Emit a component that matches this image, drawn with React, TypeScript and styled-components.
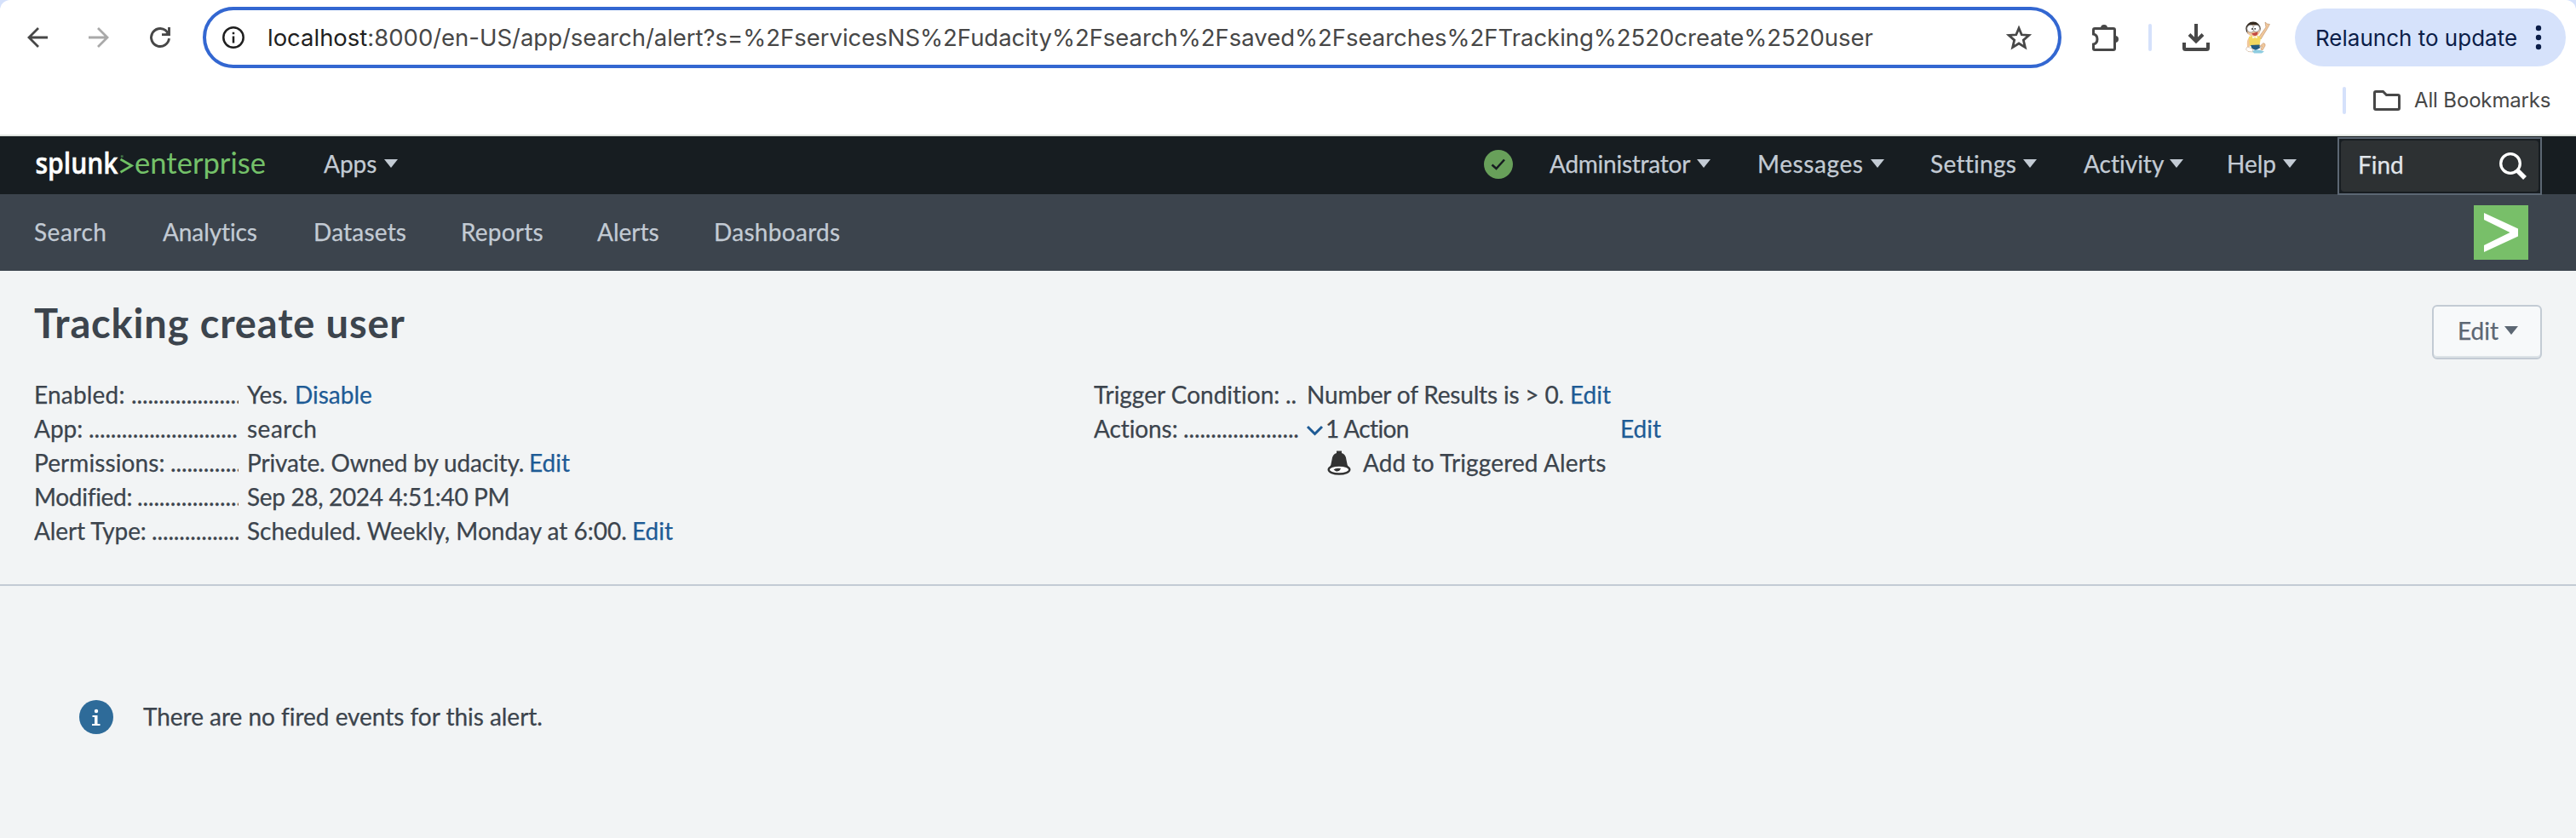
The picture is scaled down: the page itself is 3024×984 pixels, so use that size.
import React from 'react';
import styled, { createGlobalStyle } from 'styled-components';

const GlobalStyle = createGlobalStyle`
  * { box-sizing: border-box; }
  body { margin: 0; background: #f2f4f5; }
  a { color: inherit; text-decoration: none; }
`;

const Page = styled.div`
  width: 3024px;
  height: 984px;
  overflow: hidden;
  background: #f2f4f5;
  color: #3c444d;
  font-family: Lato, 'Open Sans', sans-serif;
  font-size: 28px;
  font-variant-ligatures: none;
  -webkit-text-stroke: 0.25px currentColor;
  white-space: nowrap;
`;

/* Browser chrome */
const ChromeBack = styled.div`
  background: #d5e1fb;
`;
const Chrome = styled.header`
  height: 160px;
  background: #fff;
  border-bottom: 2px solid #dfe3df;
  border-radius: 12px 12px 0 0;
  font-family: Inter, Roboto, sans-serif;
  color: #474747;
  -webkit-text-stroke: 0;
`;
const Toolbar = styled.div`
  height: 88px;
  display: flex;
  align-items: center;
  padding-left: 32px;
`;
const Glyph = styled.svg<{ $ml?: number }>`
  display: block;
  flex: none;
  overflow: visible;
  margin-left: ${(p) => p.$ml ?? 0}px;
`;
const AddressBar = styled.div`
  width: 2182px;
  height: 72px;
  margin-left: 38px;
  padding-left: 19px;
  border: 4px solid #3367d1;
  border-radius: 36px;
  display: flex;
  align-items: center;
`;
const Url = styled.span`
  width: 2041px;
  margin-left: 27px;
  font-size: 27.5px;
  letter-spacing: -0.02px;
  b { font-weight: 400; color: #1f1f1f; }
`;
const Separator = styled.i<{ $ml: number }>`
  width: 4px;
  height: 32px;
  margin-left: ${(p) => p.$ml}px;
  border-radius: 2px;
  background: #d5e1fb;
`;
const Relaunch = styled.button`
  width: 318px;
  height: 68px;
  margin-left: 29px;
  padding: 0 28px 0 24px;
  border: 0;
  border-radius: 34px;
  background: #d6e2fb;
  color: #0b1d48;
  font: 26px Inter, Roboto, sans-serif;
  display: flex;
  align-items: center;
  justify-content: space-between;
`;
const BookmarksBar = styled.div`
  height: 60px;
  display: flex;
  align-items: center;
  padding-left: 2750px;
  font-size: 24px;
  letter-spacing: -0.15px;
  span { margin: -1px 0 0 16px; }
`;

/* Application bars */
const AppBar = styled.nav`
  height: 68px;
  background: #171d21;
  color: #c3cbd4;
  display: flex;
  align-items: flex-start;
  padding-left: 40px;
`;
const Menu = styled.a<{ $w: number; $track?: number }>`
  width: ${(p) => p.$w}px;
  line-height: 64px;
  letter-spacing: ${(p) => p.$track ?? 0}px;
  display: flex;
  align-items: center;
`;
const Caret = styled.i<{ $ml?: number }>`
  flex: none;
  margin-left: ${(p) => p.$ml ?? 10}px;
  border: 8px solid transparent;
  border-top: 10px solid currentColor;
  border-bottom: 0;
`;
const Health = styled.div`
  width: 34px;
  height: 34px;
  margin: 16px 43px 0 1275px;
  border-radius: 50%;
  background: #68a05a;
  display: flex;
  align-items: center;
  justify-content: center;
`;
const FindBox = styled.div`
  width: 240px;
  height: 68px;
  margin-top: 1px;
  padding: 2px;
  border: 2px solid #5c6773;
  background: #171d21;
`;
const FindField = styled.div`
  height: 60px;
  padding: 0 14px 0 20px;
  border-radius: 4px;
  background: #2d3133;
  color: #e1e6eb;
  display: flex;
  align-items: center;
  justify-content: space-between;
  span { margin-top: -4px; }
`;
const NavBar = styled.nav`
  height: 90px;
  background: #3c444d;
  color: #c3cbd4;
  display: flex;
  align-items: center;
  padding: 0 56px 0 40px;
`;
const NavLink = styled.a<{ $w: number; $track?: number }>`
  width: ${(p) => p.$w}px;
  margin-top: -3px;
  letter-spacing: ${(p) => p.$track ?? 0}px;
`;
const AppBadge = styled.svg`
  display: block;
  margin-left: auto;
  background: #78bf69;
`;

/* Alert details */
const Details = styled.section`
  height: 370px;
  padding: 40px 40px 0;
  border-bottom: 2px solid #c3cbd4;
`;
const Heading = styled.div`
  height: 85px;
  display: flex;
  justify-content: space-between;
  align-items: flex-start;
`;
const Title = styled.h1`
  margin: -8px 0 0;
  font-size: 47px;
  line-height: 58px;
  font-weight: 700;
  letter-spacing: 0.85px;
  -webkit-text-stroke: 0;
`;
const EditButton = styled.button`
  width: 129px;
  height: 64px;
  padding: 0 0 5px 28px;
  border: 2px solid #c3cbd4;
  border-radius: 6px;
  box-shadow: inset 0 -2px 0 #dde3e7;
  background: #f7f9fa;
  color: #5c6773;
  font: 28px Lato, sans-serif;
  display: flex;
  align-items: center;
`;
const Columns = styled.div`
  display: grid;
  grid-template-columns: 1244px 1fr;
`;
const Entry = styled.div`
  height: 40px;
  line-height: 40px;
  display: flex;
`;
const Label = styled.span`
  width: 240px;
  margin-right: 10px;
  overflow: hidden;
  display: flex;
`;
const LabelText = styled.span<{ $w: number; $track?: number }>`
  width: ${(p) => p.$w}px;
  flex: none;
  letter-spacing: ${(p) => p.$track ?? 0}px;
`;
const Dots = styled.span`
  letter-spacing: -0.14px;
`;
const Value = styled.span<{ $w?: number; $track?: number }>`
  width: ${(p) => (p.$w ? `${p.$w}px` : 'auto')};
  letter-spacing: ${(p) => p.$track ?? 0}px;
`;
const Link = styled.a`
  color: #1e5b95;
`;
const ActionItem = styled.div`
  height: 40px;
  line-height: 40px;
  padding-left: 274px;
  letter-spacing: 0.14px;
  display: flex;
  align-items: center;
  span { margin-left: 14px; }
`;
const Notice = styled.section`
  height: 308px;
  padding: 0 93px;
  display: flex;
  align-items: center;
  letter-spacing: -0.03px;
  span { margin: -3px 0 0 35px; }
`;

const Logo = () => (
  <Glyph width={340} height={68} viewBox="40 160 340 68">
    <text x="41.5" y="203.7" textLength="97" lengthAdjust="spacingAndGlyphs" fontFamily="Open Sans" fontWeight="600" fontSize="34" fill="#fff" stroke="#fff" strokeWidth=".5">splunk</text>
    <path d="M141.5 187L154.5 194.6L141.5 202.3" fill="none" stroke="#6fc163" strokeWidth="2.8" />
    <rect x="141.8" y="182.3" width="2.8" height="2.6" fill="#3f7044" />
    <text x="158" y="203.7" textLength="154" lengthAdjust="spacingAndGlyphs" fontFamily="Lato" fontSize="35.5" fill="#74c169">enterprise</text>
  </Glyph>
);

const Mascot = () => (
  <Glyph $ml={41} width={30} height={40} viewBox="0 0 30 40">
    <path d="M17 19L25 8L24 2L26.5 4L29.5 4.5L27 9L19 22Z" fill="#f1c79b" stroke="#b98f68" strokeWidth=".6" />
    <path d="M6 19Q2 22 3 31L6 31L7 24Z" fill="#f1c79b" />
    <ellipse cx="10" cy="9.7" rx="8.7" ry="8.2" fill="#33291f" />
    <ellipse cx="10.5" cy="12" rx="7.6" ry="7" fill="#f3c9a1" />
    <circle cx="7.1" cy="9.6" r="4.4" fill="#fff" stroke="#777" strokeWidth=".7" />
    <circle cx="13.6" cy="9.3" r="4" fill="#fff" stroke="#777" strokeWidth=".7" />
    <circle cx="9" cy="10" r=".9" fill="#222" />
    <circle cx="12.2" cy="9.8" r=".9" fill="#222" />
    <path d="M8.2 15.2L15.6 13.4Q15.4 18 12 18Q9.4 17.8 8.2 15.2Z" fill="#c34a42" />
    <path d="M5 19L9 18L12 20L15 17.6L19 20L17.6 29L6 30Z" fill="#f3d75f" />
    <path d="M9 18L12 20.6L15 17.8L14.6 21L12 20L9.5 21.2Z" fill="#fff" />
    <path d="M7 29L17.5 28.4L18.5 32L13 35L8.5 33Z" fill="#245a80" />
    <path d="M17 31L22 26.5Q25 27 24 30L21 35L18.8 34L20.5 30Z" fill="#f1c79b" stroke="#b98f68" strokeWidth=".5" />
    <path d="M3 31L9 33L10 37L4 36.5L1.5 34Z" fill="#fff" stroke="#caa98c" strokeWidth=".6" />
    <path d="M9 36Q15 33 23 36.5L20 38.5H11Z" fill="#8dcce0" />
  </Glyph>
);

const systemMenus = [
  { text: 'Administrator', w: 244, track: -0.25, gap: 8 },
  { text: 'Messages', w: 203, track: 0.6, gap: 8 },
  { text: 'Settings', w: 180, track: 0.3, gap: 8 },
  { text: 'Activity', w: 168, track: 0, gap: 7 },
  { text: 'Help', w: 130, track: 0, gap: 8 },
];

const navItems = [
  { text: 'Search', w: 151, track: 0.5 },
  { text: 'Analytics', w: 177, track: -0.1 },
  { text: 'Datasets', w: 173, track: 0.2 },
  { text: 'Reports', w: 160, track: 0.2 },
  { text: 'Alerts', w: 137, track: 0 },
  { text: 'Dashboards', w: 200, track: 0.3 },
];

type Field = {
  label: string;
  lw: number;
  lt?: number;
  dots: number;
  value: string;
  vw: number;
  vt?: number;
  link?: string;
};
const fields: Field[] = [
  { label: 'Enabled:', lw: 114, lt: 0.2, dots: 20, value: 'Yes.', vw: 56, link: 'Disable' },
  { label: 'App:', lw: 64, dots: 27, value: 'search', vw: 90, vt: 0.5 },
  { label: 'Permissions:', lw: 160, lt: 0.1, dots: 13, value: 'Private. Owned by udacity.', vw: 331, vt: -0.15, link: 'Edit' },
  { label: 'Modified:', lw: 121, lt: -0.3, dots: 19, value: 'Sep 28, 2024 4:51:40 PM', vw: 320, vt: -0.34 },
  { label: 'Alert Type:', lw: 138, lt: -0.1, dots: 16, value: 'Scheduled. Weekly, Monday at 6:00.', vw: 452, vt: 0, link: 'Edit' },
];

export default function App() {
  return (
    <Page>
      <GlobalStyle />
      <ChromeBack>
        <Chrome>
          <Toolbar>
            <Glyph width={24} height={24} fill="none" stroke="#474747" strokeWidth={2.8}>
              <path d="M24 12H2M13 1L2 12L13 23" />
            </Glyph>
            <Glyph $ml={48} width={24} height={24} fill="none" stroke="#a9a9a9" strokeWidth={2.8}>
              <path d="M0 12H22M11 1L22 12L11 23" />
            </Glyph>
            <Glyph $ml={48} width={24} height={24} fill="none" stroke="#474747" strokeWidth={2.9}>
              <path d="M22.5 13.2A10.5 10.5 0 1 1 18.5 3.7L22 7.5" />
              <path d="M14 8.6H22.5V0" />
              <path d="M17 9L22 4V9Z" fill="#474747" stroke="none" />
            </Glyph>
            <AddressBar>
              <Glyph width={26} height={26} fill="none" stroke="#1f1f1f" strokeWidth={2.5}>
                <circle cx={13} cy={13} r={11.7} />
                <path d="M13 11.4V19.4M13 6.8V9.3" />
              </Glyph>
              <Url>
                <b>localhost</b>:8000/en-US/app/search/alert?s=%2FservicesNS%2Fudacity%2Fsearch%2Fsaved%2Fsearches%2FTracking%2520create%2520user
              </Url>
              <Glyph width={30} height={29} viewBox="1.5 1.2 27 26.1" fill="none" stroke="#474747" strokeWidth={2.5}>
                <path d="M15 4L17.9 10.9L25.6 11.5L19.8 16.6L21.6 24.2L15 20.1L8.4 24.2L10.2 16.6L4.4 11.5L12.1 10.9Z" />
              </Glyph>
            </AddressBar>
            <Glyph $ml={36} width={32} height={36} viewBox="0 0 32 36" fill="none" stroke="#474747" strokeWidth={3}>
              <path d="M1.5 14V9Q1.5 7.5 3 7.5H25Q26.5 7.5 26.5 9V31Q26.5 32.5 25 32.5H3Q1.5 32.5 1.5 31V26C7.5 24.5 7.5 15.5 1.5 14Z" />
              <path d="M10 7A4 4 0 0 1 18 7ZM27 16A4 4 0 0 1 27 24Z" fill="#474747" stroke="none" />
            </Glyph>
            <Separator $ml={34} />
            <Glyph $ml={36} width={32} height={32} fill="none" stroke="#474747" strokeWidth={4}>
              <path d="M16 0V21M8 12.5L16 20.5L24 12.5M2 22V28.5Q2 30 3.5 30H28.5Q30 30 30 28.5V22" />
            </Glyph>
            <Mascot />
            <Relaunch>
              Relaunch to update
              <Glyph width={8} height={30} fill="#0b1d48">
                <circle cx={4} cy={4} r={3.2} />
                <circle cx={4} cy={15} r={3.2} />
                <circle cx={4} cy={26} r={3.2} />
              </Glyph>
            </Relaunch>
          </Toolbar>
          <BookmarksBar>
            <Separator $ml={0} />
            <Glyph $ml={32} width={32} height={24} fill="none" stroke="#474747" strokeWidth={3}>
              <path d="M1.5 3Q1.5 1.5 3 1.5H11.5L15.5 5.5H29Q30.5 5.5 30.5 7V21Q30.5 22.5 29 22.5H3Q1.5 22.5 1.5 21Z" />
            </Glyph>
            <span>All Bookmarks</span>
          </BookmarksBar>
        </Chrome>
      </ChromeBack>

      <AppBar>
        <Logo />
        <Menu $w={87}>Apps<Caret $ml={9} /></Menu>
        <Health>
          <Glyph width={18} height={14} fill="none" stroke="#171d21" strokeWidth={2.6}>
            <path d="M1.5 7.5L6.5 12L16 1.5" />
          </Glyph>
        </Health>
        {systemMenus.map((m) => (
          <Menu key={m.text} $w={m.w} $track={m.track}>{m.text}<Caret $ml={m.gap} /></Menu>
        ))}
        <FindBox>
          <FindField>
            <span>Find</span>
            <Glyph width={32} height={32} fill="none" stroke="#fff">
              <circle cx={13} cy={13} r={11.3} strokeWidth={3.3} />
              <path d="M20.5 20.5L30 30" strokeWidth={5.5} />
            </Glyph>
          </FindField>
        </FindBox>
      </AppBar>

      <NavBar>
        {navItems.map((n) => (
          <NavLink key={n.text} $w={n.w} $track={n.track}>{n.text}</NavLink>
        ))}
        <AppBadge width={64} height={64}>
          <path d="M12 9L52 27.5V36.5L12 55V47L42.5 32L12 17Z" fill="#fff" />
        </AppBadge>
      </NavBar>

      <Details>
        <Heading>
          <Title>Tracking create user</Title>
          <EditButton>Edit<Caret $ml={7} /></EditButton>
        </Heading>
        <Columns>
          <div>
            {fields.map((f) => (
              <Entry key={f.label}>
                <Label>
                  <LabelText $w={f.lw} $track={f.lt}>{f.label}</LabelText>
                  <Dots>{'.'.repeat(f.dots)}</Dots>
                </Label>
                <Value $w={f.vw} $track={f.vt}>{f.value}</Value>
                {f.link && <Link>{f.link}</Link>}
              </Entry>
            ))}
          </div>
          <div>
            <Entry>
              <Label>
                <LabelText $w={225}>Trigger Condition:</LabelText>
                <Dots>..</Dots>
              </Label>
              <Value $w={309} $track={-0.18}>Number of Results is &gt; 0.</Value>
              <Link>Edit</Link>
            </Entry>
            <Entry>
              <Label>
                <LabelText $w={105} $track={-0.1}>Actions:</LabelText>
                <Dots>{'.'.repeat(21)}</Dots>
              </Label>
              <Glyph width={22} height={40} fill="none" stroke="#1e5b95" strokeWidth={3}>
                <path d="M1 18L9.5 26.5L18 18" />
              </Glyph>
              <Value $w={346} $track={-0.6}>1 Action</Value>
              <Link>Edit</Link>
            </Entry>
            <ActionItem>
              <Glyph width={28} height={29} viewBox="0 0 28 29">
                <path d="M11 3V0.5H17V3Q22 4.5 22.5 11Q23 17 26 21H2Q5 17 5.5 11Q6 4.5 11 3Z" fill="#333" />
                <ellipse cx="14" cy="22.5" rx="12.3" ry="5" fill="#fff" stroke="#333" strokeWidth="2.4" />
                <path d="M7.5 22.5Q10 20 16 21Q14.5 25 10.5 24.5Z" fill="#333" />
              </Glyph>
              <span>Add to Triggered Alerts</span>
            </ActionItem>
          </div>
        </Columns>
      </Details>

      <Notice>
        <Glyph width={40} height={40}>
          <circle cx={20} cy={20} r={20} fill="#2e6b99" />
          <path d="M15.5 18H21.5V28H24.5V30H15V28H18V20H15.5Z" fill="#fff" />
          <circle cx={20} cy={13} r={2.2} fill="#fff" />
        </Glyph>
        <span>There are no fired events for this alert.</span>
      </Notice>
    </Page>
  );
}
